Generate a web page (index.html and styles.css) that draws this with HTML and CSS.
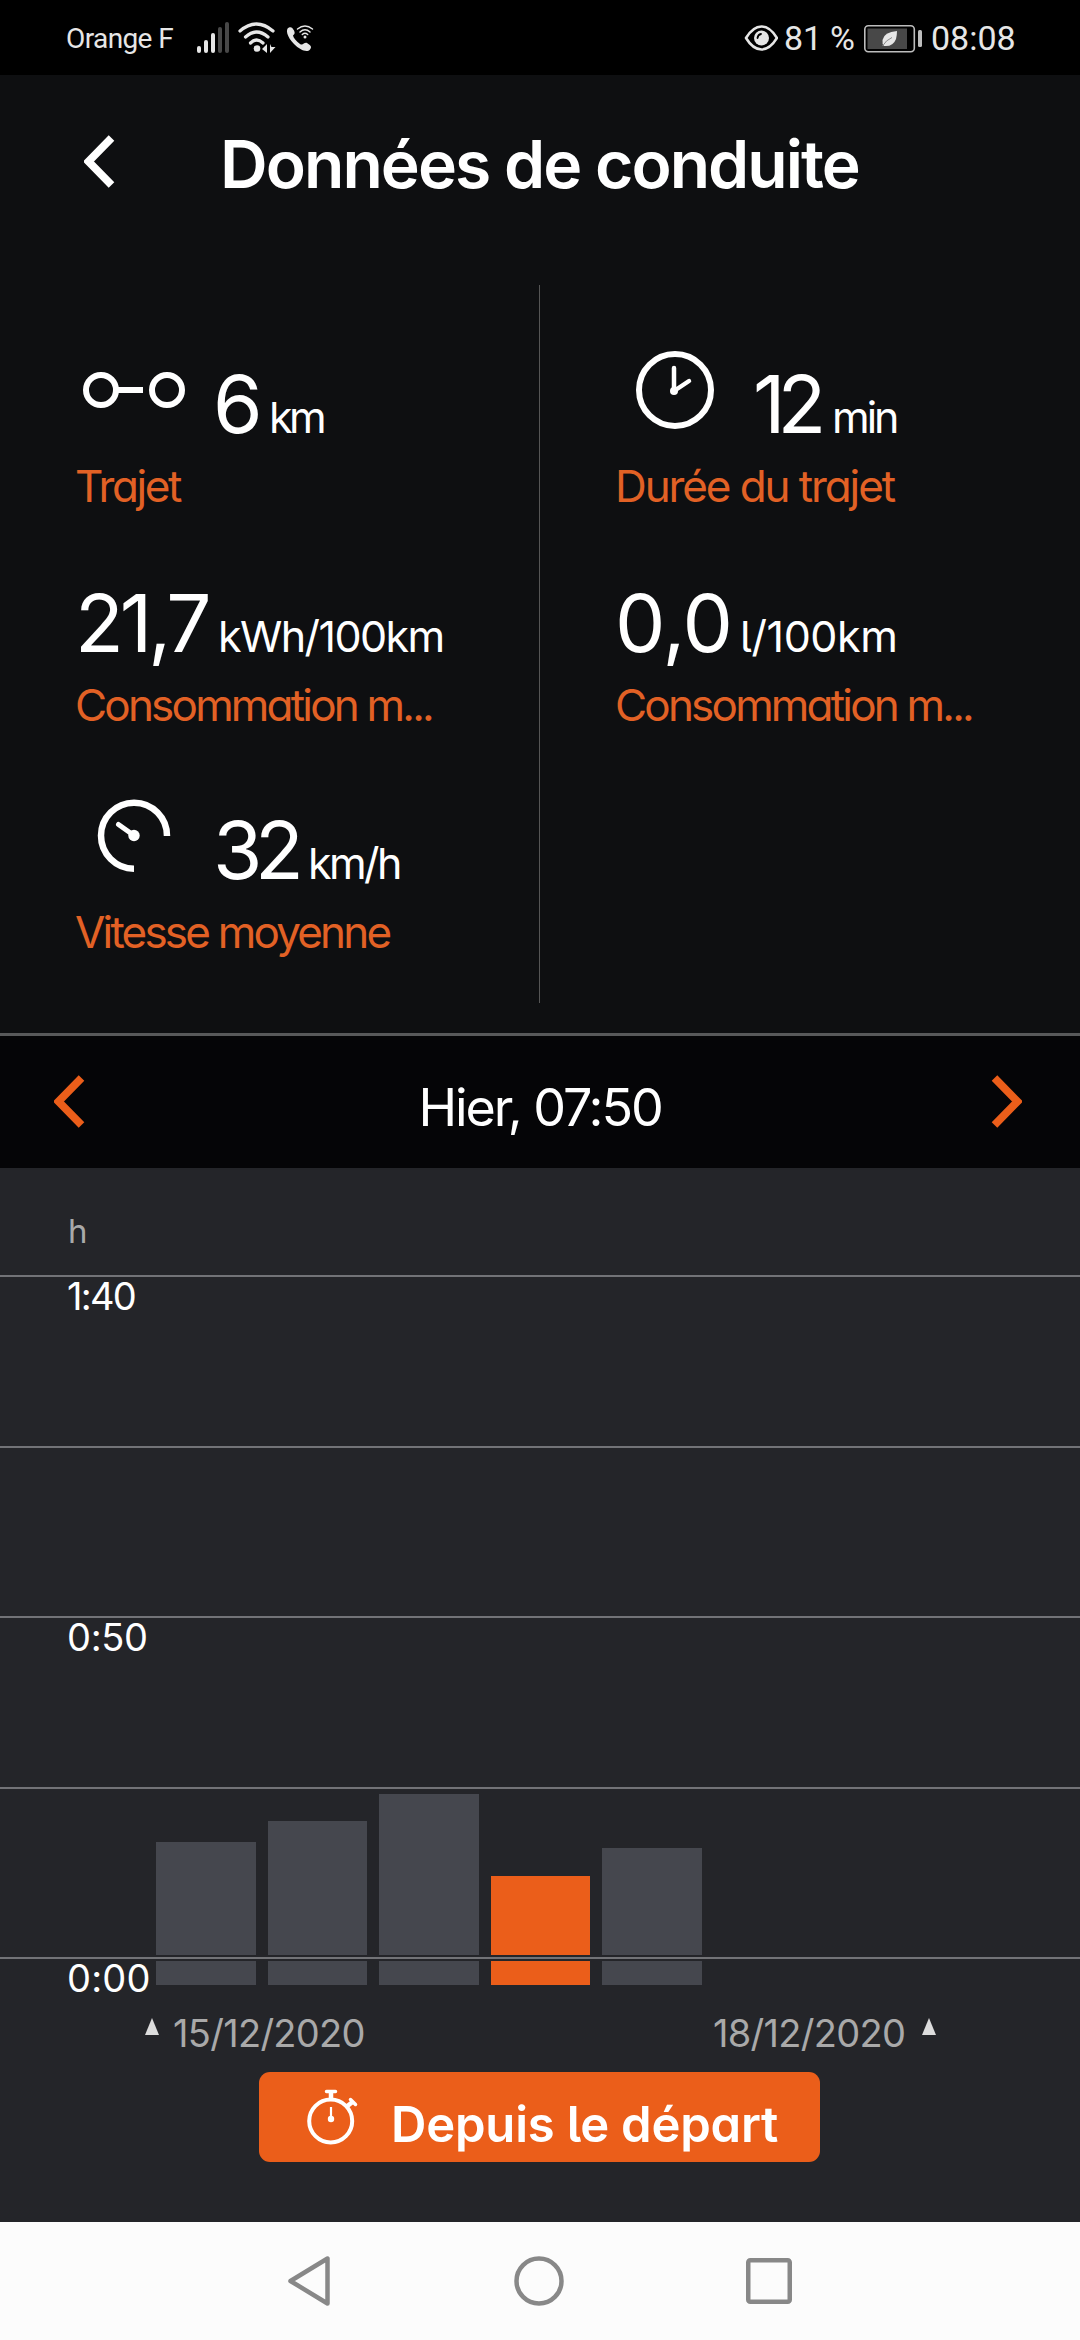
FILE: index.html
```html
<!DOCTYPE html>
<html lang="fr">
<head>
<meta charset="utf-8">
<title>Données de conduite</title>
<link rel="stylesheet" href="styles.css">
</head>
<body>
<div class="status">
  <span class="carrier">Orange F</span>
  <svg class="status-left" width="120" height="40" viewBox="195 18 120 40">
    <g fill="#e6e6e6">
      <rect x="197" y="46" width="4" height="7" rx="2"/>
      <rect x="204" y="40" width="4" height="13" rx="2"/>
      <rect x="211" y="33" width="4" height="20" rx="2"/>
    </g>
    <g fill="#484848">
      <rect x="218" y="27" width="4" height="26" rx="2"/>
      <rect x="225" y="22" width="4" height="31" rx="2"/>
    </g>
    <g fill="none" stroke="#e6e6e6" stroke-width="3.2" stroke-linecap="round">
      <path d="M240 31Q256.500 17 273 31"/>
      <path d="M245.500 37Q256.500 27 268 37"/>
      <path d="M250.500 43Q256.500 37 263 43"/>
    </g>
    <circle cx="257" cy="48.500" r="3.300" fill="#e6e6e6"/>
    <path d="M267 44V53L262 49ZM270 53V44L271.500 47H275.500Z" fill="#e6e6e6"/>
    <path d="M289 27.500C285 29 287 37 294 44C300 50 307 53 310 49.500C312 47 311 45.500 307 43C304 42 303 46 300 44C296 41 293.500 38 293 35.500C295 34 295 32.500 294 30.500C292.500 27.500 291 26.500 289 27.500Z" fill="#e6e6e6"/>
    <g fill="none" stroke="#e6e6e6" stroke-width="1.500" stroke-linecap="round">
      <path d="M297.500 29Q305 23 312.500 29"/>
      <path d="M300 32Q305 27.500 310 32"/>
      <path d="M302.300 34.500Q305 32 307.700 34.500"/>
    </g>
    <circle cx="305" cy="37" r="1.500" fill="#e6e6e6"/>
  </svg>
  <svg class="eye" width="34" height="28" viewBox="744 23 34 28">
    <path d="M746 37Q753 25.500 761.500 25.500T777 37Q770 48.500 761.500 48.500T746 37Z" fill="none" stroke="#e6e6e6" stroke-width="2.600" stroke-linejoin="round"/>
    <circle cx="761.500" cy="37" r="7.500" fill="#e6e6e6"/>
    <path d="M757.500 37Q758 33.500 761 33" fill="none" stroke="#000" stroke-width="1.800" stroke-linecap="round"/>
  </svg>
  <span class="level">81 %</span>
  <svg class="battery" width="60" height="30" viewBox="863 22 60 30">
    <rect x="864.800" y="24.800" width="49.500" height="26" rx="3.500" fill="none" stroke="#bdbdbd" stroke-width="1.600"/>
    <rect x="867.500" y="27.500" width="39.500" height="20.500" fill="#484848"/>
    <path d="M897 30Q884 31 882.500 39Q882 43 884 45Q893 46 896 38Q897 34 897 30Z" fill="#e6e6e6"/>
    <path d="M882.500 45Q886 39 892 36.500" fill="none" stroke="#8a8a8a" stroke-width="1"/>
    <rect x="918" y="29" width="4" height="17" rx="1.500" fill="#bdbdbd"/>
  </svg>
  <span class="clock">08:08</span>
</div>

<main class="trip">
  <header class="titlebar">
    <svg width="32" height="54" viewBox="0 0 32 54"><path d="M27.500 3L4.500 26.500L27.500 50" fill="none" stroke="#fff" stroke-width="7.800"/></svg>
    <h1>Données de conduite</h1>
  </header>

  <section class="stats">
    <div class="col">
      <div class="stat">
        <div class="value"><svg class="icon" width="138" height="80" viewBox="76 350 138 80"><g fill="none" stroke="#fff" stroke-width="6"><circle cx="102" cy="390" r="15"/><circle cx="168" cy="390" r="15"/><path d="M118 390H144"/></g></svg><b class="n6">6</b><i class="u-km">km</i></div>
        <div class="label l-trajet">Trajet</div>
      </div>
      <div class="stat">
        <div class="value"><b class="n217">21,7</b><i class="u-kwh">kWh/100km</i></div>
        <div class="label l-conso">Consommation m...</div>
      </div>
      <div class="stat speed">
        <div class="value"><svg class="icon" width="138" height="80" viewBox="76 796 138 80"><path d="M168 836A33 33 0 1 0 135 868.700" fill="none" stroke="#fff" stroke-width="6.500"/><path d="M119.500 824.500L135 835.500" stroke="#fff" stroke-width="5" stroke-linecap="round"/><circle cx="135" cy="835.500" r="5.700" fill="#fff"/></svg><b class="n32">32</b><i class="u-kmh">km/h</i></div>
        <div class="label l-vitesse">Vitesse moyenne</div>
      </div>
    </div>
    <div class="col right">
      <div class="stat">
        <div class="value"><svg class="icon" width="138" height="80" viewBox="615 350 138 80"><circle cx="675" cy="390" r="36" fill="none" stroke="#fff" stroke-width="6"/><path d="M674 368V391L689 381" fill="none" stroke="#fff" stroke-width="4.500" stroke-linecap="round" stroke-linejoin="round"/><circle cx="674" cy="391" r="4" fill="#fff"/></svg><b class="n12">12</b><i class="u-min">min</i></div>
        <div class="label l-duree">Durée du trajet</div>
      </div>
      <div class="stat">
        <div class="value"><b class="n00">0,0</b><i class="u-l">l/100km</i></div>
        <div class="label l-conso">Consommation m...</div>
      </div>
    </div>
  </section>
</main>

<nav class="picker">
  <svg width="32" height="54" viewBox="0 0 32 54"><path d="M27.500 3L4.500 26.500L27.500 50" fill="none" stroke="#eb5e1a" stroke-width="7.800"/></svg>
  <span>Hier, 07:50</span>
  <svg width="32" height="54" viewBox="0 0 32 54"><path d="M4.500 3L27.500 26.500L4.500 50" fill="none" stroke="#eb5e1a" stroke-width="7.800"/></svg>
</nav>

<section class="chart">
  <div class="unit">h</div>
  <div class="band"><span class="tick t140">1:40</span></div>
  <div class="band"></div>
  <div class="band"><span class="tick">0:50</span></div>
  <div class="band bars">
    <div class="bar" style="height:113px"></div>
    <div class="bar" style="height:134px"></div>
    <div class="bar" style="height:161px"></div>
    <div class="bar on" style="height:79px"></div>
    <div class="bar" style="height:107px"></div>
  </div>
  <div class="base">
    <span class="tick t000">0:00</span>
    <div class="feet"><div class="foot"></div><div class="foot"></div><div class="foot"></div><div class="foot on"></div><div class="foot"></div></div>
  </div>
  <div class="range">
    <svg width="14" height="17" viewBox="0 0 14 17"><path d="M7 0L14 17H0Z" fill="#ddd"/></svg>
    <span class="from">15/12/2020</span>
    <span class="to">18/12/2020</span>
    <svg width="14" height="17" viewBox="0 0 14 17"><path d="M7 0L14 17H0Z" fill="#ddd"/></svg>
  </div>
  <button class="mode">
    <svg width="56" height="60" viewBox="304 2087 56 60"><g fill="none" stroke="#fff"><circle cx="330.700" cy="2121" r="21.500" stroke-width="4"/><path d="M331 2099V2091M345.500 2107.500L352.500 2102" stroke-width="4.500"/><path d="M326.500 2091.500H335.500M350.500 2099.500L355.500 2104.500" stroke-width="3.500" stroke-linecap="round"/><path d="M331 2107V2119" stroke-width="2.200"/></g><circle cx="331" cy="2119" r="3.200" fill="#fff"/></svg>
    <span>Depuis le départ</span>
  </button>
</section>

<footer class="sysnav">
  <svg width="44" height="52" viewBox="0 0 44 52"><path d="M40.500 3.500V48.500L3.500 26Z" fill="none" stroke="#888" stroke-width="4.500" stroke-linejoin="round"/></svg>
  <svg width="50" height="50" viewBox="0 0 50 50"><circle cx="25" cy="25" r="22.500" fill="none" stroke="#888" stroke-width="4.500"/></svg>
  <svg width="46" height="46" viewBox="0 0 46 46"><rect x="2.250" y="2.250" width="41.500" height="41.500" rx="2" fill="none" stroke="#888" stroke-width="4.500"/></svg>
</footer>
</body>
</html>
```
FILE: styles.css
```css
* { box-sizing: border-box; }
body {
  margin: 0;
  width: 1080px;
  height: 2340px;
  background: #0e0f11;
  color: #fff;
  font-family: Inter, "Liberation Sans", sans-serif;
  font-feature-settings: "cv11", "cv05";
  display: flex;
  flex-direction: column;
  overflow: hidden;
}
svg { display: block; flex: none; }
span, b, i, h1 { white-space: nowrap; }

/* status bar */
.status {
  height: 75px;
  flex: none;
  background: #000;
  color: #e6e6e6;
  display: flex;
  align-items: center;
  font-family: Roboto, sans-serif;
  padding-left: 66px;
}
.carrier { font-size: 28px; width: 129px; line-height: 75px; padding-top: 1px; letter-spacing: -0.6px; }
.eye { margin-left: 429px; }
.level { font-size: 34px; width: 79px; padding-left: 6px; letter-spacing: -0.2px; }
.battery { margin-left: 6px; }
.clock { font-size: 34px; padding-left: 8px; }

/* title and trip values */
.trip { height: 958px; flex: none; }
.titlebar { height: 210px; display: flex; align-items: flex-start; padding: 60px 0 0 84px; }
.titlebar h1 { margin: -11px 0 0 104px; font-size: 66px; line-height: 80px; font-weight: 600; letter-spacing: -1.95px; }
.stats { display: grid; grid-template-columns: 539px 541px; height: 718px; }
.col { padding: 60px 0 0 75px; }
.right { border-left: 1px solid #555; }
.stat { height: 219px; }
.speed { padding-top: 8px; }
.value { display: flex; align-items: baseline; height: 118px; line-height: 118px; }
.icon { align-self: flex-start; margin-top: 5px; }
.value b { font-size: 80px; font-weight: 400; flex: none; }
.value i { font-size: 43px; font-style: normal; font-weight: 400; }
.n6 { width: 56px; }
.n12 { width: 79px; letter-spacing: -8px; }
.n217 { width: 143px; letter-spacing: -4px; }
.n00 { width: 125px; letter-spacing: -1px; }
.n32 { width: 95px; letter-spacing: -7.5px; }
.u-km { letter-spacing: -3.5px; }
.u-min { letter-spacing: -3px; }
.u-kwh { letter-spacing: -1.6px; }
.u-l { letter-spacing: -0.4px; }
.u-kmh { letter-spacing: -2.6px; }
.label { font-size: 44px; line-height: 56px; margin-top: -5px; color: #e26125; font-weight: 400; white-space: nowrap; }
.l-trajet { letter-spacing: -2.4px; }
.l-conso { letter-spacing: -2.8px; }
.l-duree { letter-spacing: -2.1px; }
.l-vitesse { letter-spacing: -2.8px; }

/* trip picker */
.picker {
  height: 135px;
  flex: none;
  border-top: 3px solid #58595a;
  background: #050507;
  display: flex;
  align-items: flex-start;
  justify-content: space-between;
  padding: 39px 58px 0 54px;
}
.picker span { font-size: 52px; line-height: 64px; font-weight: 400; letter-spacing: -2.1px; margin: 1px 0 0 4px; }

/* history chart */
.chart { height: 1054px; flex: none; background: #242529; display: flex; flex-direction: column; font-weight: 400; }
.unit { height: 107px; padding: 43px 0 0 68px; font-size: 33px; line-height: 40px; color: #a9a9a9; }
.band { height: 170.5px; flex: none; border-top: 2px solid #727377; padding-left: 67px; }
.tick { font-size: 38px; line-height: 38px; display: block; letter-spacing: -0.3px; }
.t140 { letter-spacing: -1.7px; }
.bars, .feet { display: flex; gap: 12px; }
.bars { padding: 0 0 2px 156px; align-items: flex-end; }
.bar, .foot { width: 99.5px; background: #45474e; }
.on { background: #eb5e1a; }
.base { height: 56px; border-top: 2px solid #727377; display: flex; padding-left: 67px; }
.t000 { width: 89px; letter-spacing: 0.2px; }
.feet { padding-top: 2px; }
.foot { height: 24px; }
.range { height: 59px; display: flex; align-items: flex-start; padding: 5px 0 0 145px; color: #a9a9a9; font-size: 38px; line-height: 38px; }
.range span { margin-top: -4px; letter-spacing: -0.7px; }
.range .from { width: 204px; margin-left: 14px; }
.range .to { width: 209px; margin-left: 336px; }
.mode {
  margin: 0 0 0 259px;
  width: 561px;
  height: 90px;
  border: 0;
  border-radius: 11px;
  background: #eb5e1a;
  color: #fff;
  display: flex;
  align-items: flex-start;
  padding: 15px 0 0 45px;
  font: 600 49px/60px Inter, sans-serif;
  font-feature-settings: "cv11", "cv05";
}
.mode span { margin: 8px 0 0 31px; letter-spacing: -0.2px; }

/* system navigation */
.sysnav { height: 118px; flex: none; background: #fcfcfc; display: flex; align-items: center; justify-content: space-between; padding: 0 288px 0 287px; }
```
